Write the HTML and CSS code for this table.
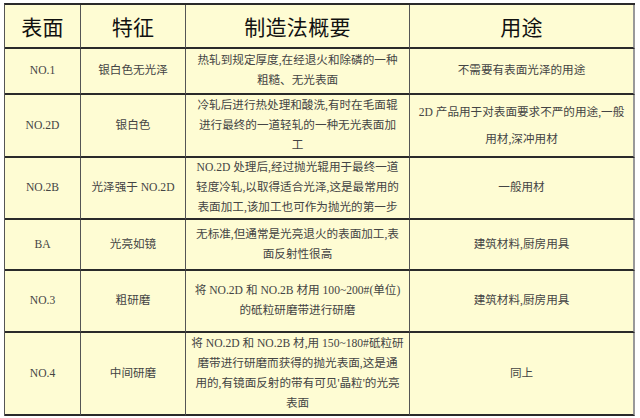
FILE: index.html
```html
<!DOCTYPE html>
<html lang="zh">
<head>
<meta charset="utf-8">
<link rel="stylesheet" href="styles.css">
</head>
<body>
<div class="wrap">
<table class="spec">
  <tr class="head">
    <th class="c1">表面</th>
    <th class="c2">特征</th>
    <th class="c3">制造法概要</th>
    <th class="c4">用途</th>
  </tr>
  <tr class="r1">
    <td class="c1">NO.1</td>
    <td class="c2">银白色无光泽</td>
    <td class="c3">热轧到规定厚度,在经退火和除磷的一种<br>粗糙、无光表面</td>
    <td class="c4">不需要有表面光泽的用途</td>
  </tr>
  <tr class="r2">
    <td class="c1">NO.2D</td>
    <td class="c2">银白色</td>
    <td class="c3">冷轧后进行热处理和酸洗,有时在毛面辊<br>进行最终的一道轻轧的一种无光表面加<br>工</td>
    <td class="c4 tall">2D 产品用于对表面要求不严的用途,一般<br>用材,深冲用材</td>
  </tr>
  <tr class="r3">
    <td class="c1">NO.2B</td>
    <td class="c2">光泽强于 NO.2D</td>
    <td class="c3">NO.2D 处理后,经过抛光辊用于最终一道<br>轻度冷轧,以取得适合光泽,这是最常用的<br>表面加工,该加工也可作为抛光的第一步</td>
    <td class="c4">一般用材</td>
  </tr>
  <tr class="r4">
    <td class="c1">BA</td>
    <td class="c2">光亮如镜</td>
    <td class="c3">无标准,但通常是光亮退火的表面加工,表<br>面反射性很高</td>
    <td class="c4">建筑材料,厨房用具</td>
  </tr>
  <tr class="r5">
    <td class="c1">NO.3</td>
    <td class="c2">粗研磨</td>
    <td class="c3">将 NO.2D 和 NO.2B 材用 100~200#(单位)<br>的砥粒研磨带进行研磨</td>
    <td class="c4">建筑材料,厨房用具</td>
  </tr>
  <tr class="r6">
    <td class="c1">NO.4</td>
    <td class="c2">中间研磨</td>
    <td class="c3">将 NO.2D 和 NO.2B 材,用 150~180#砥粒研<br>磨带进行研磨而获得的抛光表面,这是通<br>用的,有镜面反射的带有可见'晶粒'的光亮<br>表面</td>
    <td class="c4">同上</td>
  </tr>
</table>
</div>
</body>
</html>
```

FILE: styles.css
```css
html, body {
  margin: 0;
  padding: 0;
  background: #ffffff;
}

.wrap {
  padding: 3px 0 0 4px;
}

.spec {
  border-collapse: separate;
  border-spacing: 0;
  table-layout: fixed;
  width: 630px;
  background: #fefcd3;
  border-top: 2px solid #2a2a2a;
  border-left: 1px solid #555;
}

.spec th,
.spec td {
  box-sizing: border-box;
  padding: 0 4px;
  border-right: 1px solid #555;
  border-bottom: 2px solid #2a2a2a;
  text-align: center;
  vertical-align: middle;
}

.spec th {
  font-family: "Noto Sans CJK SC", "Noto Sans", sans-serif;
  font-size: 21px;
  font-weight: 400;
  color: #111;
  letter-spacing: 0.3px;
}

.spec td {
  font-family: "Liberation Serif", "Noto Sans CJK SC", serif;
  font-size: 11.6px;
  line-height: 20px;
  color: #444;
}

.spec .c1 { width: 76px; }
.spec .c2 { width: 105px; }
.spec .c3 { width: 224px; padding: 0; }
.spec .c4 { width: 225px; border-right: 2px solid #999; }

.spec td.tall { line-height: 27px; }

.head th { height: 44px; }
.r1 td { height: 46px; }
.r2 td { height: 63px; }
.r3 td { height: 61px; }
.r4 td { height: 51px; }
.r5 td { height: 62px; }
.r6 td { height: 83px; }
```
